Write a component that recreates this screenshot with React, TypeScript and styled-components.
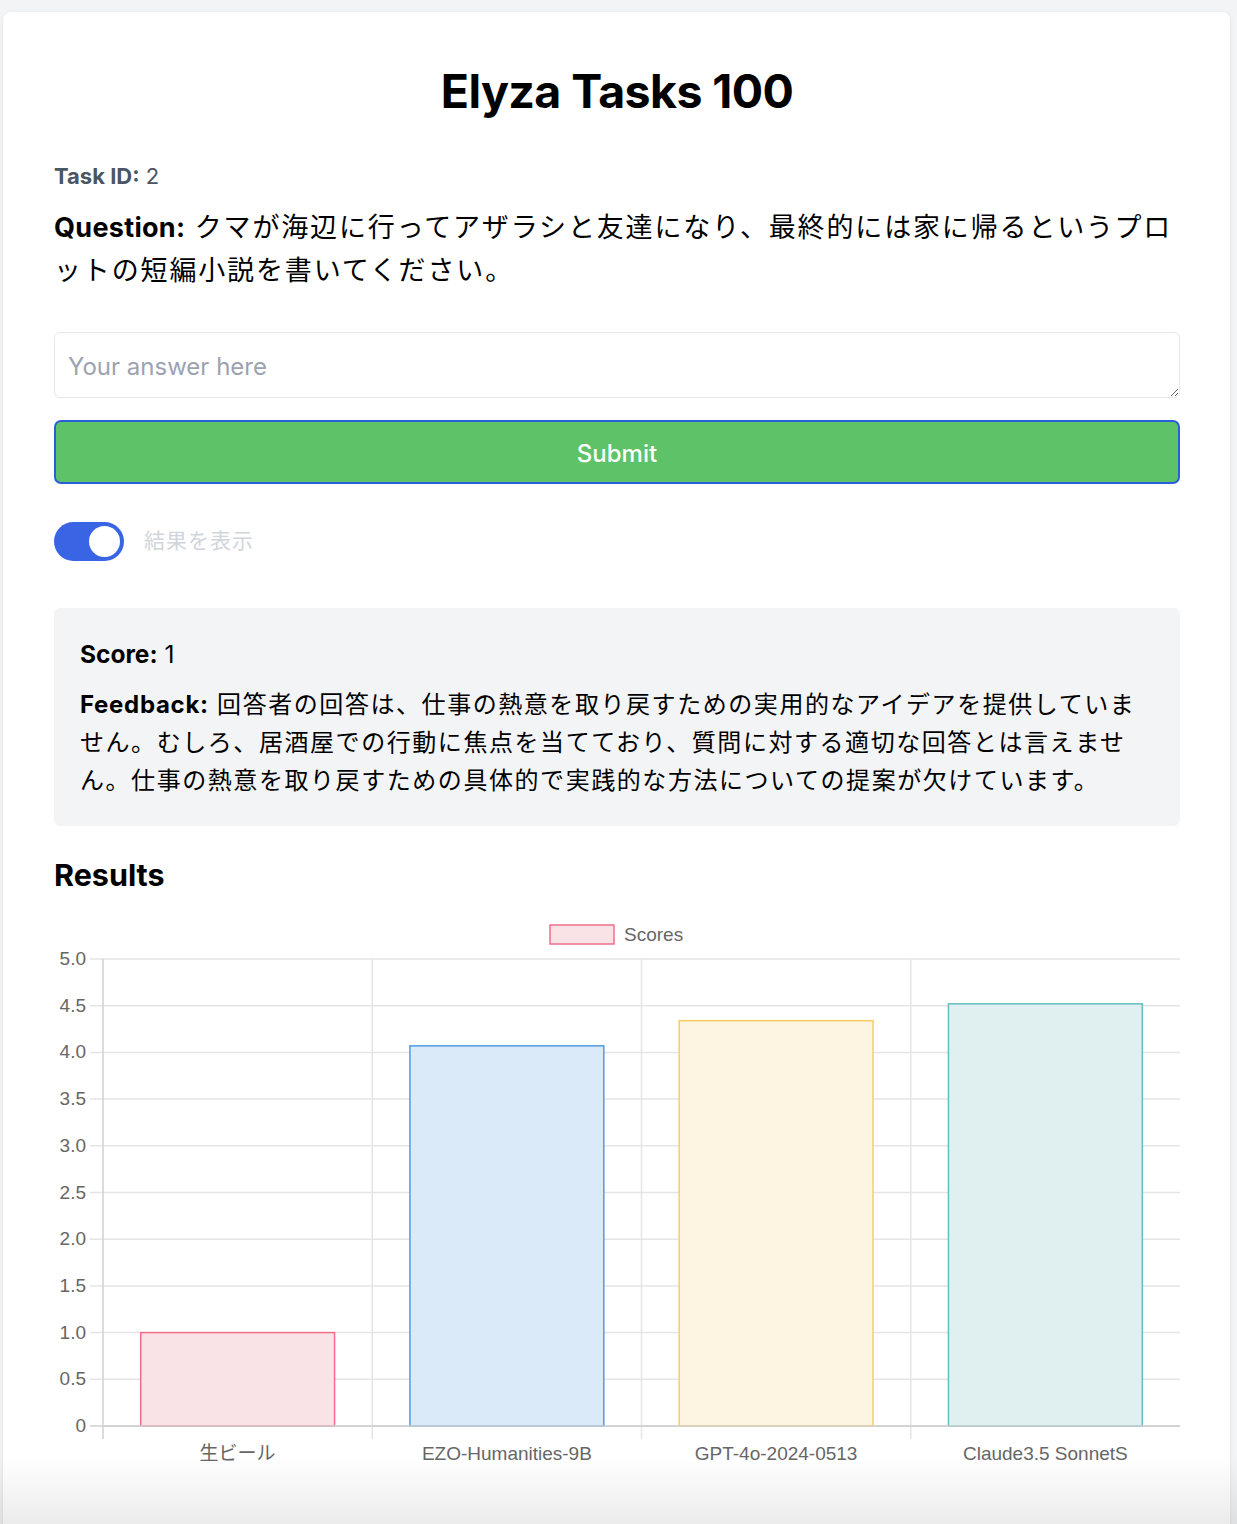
import React from "react";
import styled, { createGlobalStyle } from "styled-components";

const GlobalStyle = createGlobalStyle`
  html, body { margin: 0; padding: 0; }
  body {
    background: #f3f4f6;
    font-family: Inter, "Noto Sans CJK JP", sans-serif;
    color: #000;
  }
`;

const Page = styled.div`
  padding: 12px 7px 0 3px;
`;

const Card = styled.main`
  background: #fff;
  border-radius: 8px;
  box-shadow: 0 1px 4px rgba(0, 0, 0, 0.08);
  padding: 51px 50px 60px 51px;
`;

const Title = styled.h1`
  margin: 0 0 40px;
  text-align: center;
  font-size: 46.5px;
  line-height: 57.6px;
  font-weight: 700;
  letter-spacing: -0.6px;
`;

const TaskId = styled.p`
  margin: 0 0 15px;
  font-size: 22px;
  line-height: 30px;
  color: #4b5563;
`;

const Strong = styled.b<{ $ls?: number }>`
  font-weight: 700;
  letter-spacing: ${(p) => p.$ls ?? 0}px;
`;

const Question = styled.p`
  margin: 0 0 40px;
  font-size: 27px;
  line-height: 43px;
  letter-spacing: 1.85px;
`;

const Answer = styled.textarea`
  display: block;
  box-sizing: border-box;
  width: 100%;
  height: 66px;
  margin: 0 0 22px;
  padding: 16px 13px 12px;
  border: 1px solid #e5e7eb;
  border-radius: 6px;
  font-family: Inter, "Noto Sans CJK JP", sans-serif;
  font-size: 24px;
  line-height: 36px;
  color: #111827;
  outline: none;
  &::placeholder { color: #9ca3af; }
`;

const SubmitButton = styled.button`
  display: block;
  box-sizing: border-box;
  width: 100%;
  height: 64px;
  margin: 0 0 38px;
  padding: 3px 0 0;
  border: 2px solid #2b5fd9;
  border-radius: 7px;
  background: #5ec269;
  color: #fff;
  font-family: Inter, sans-serif;
  font-size: 24px;
  font-weight: 500;
  cursor: pointer;
`;

const ToggleRow = styled.label`
  display: flex;
  align-items: center;
  gap: 20px;
  margin: 0 0 47px;
`;

const Track = styled.span<{ $on: boolean }>`
  position: relative;
  display: inline-block;
  width: 70px;
  height: 39px;
  border-radius: 20px;
  background: ${(p) => (p.$on ? "#3964e4" : "#d1d5db")};
`;

const Knob = styled.span<{ $on: boolean }>`
  position: absolute;
  top: 4px;
  left: ${(p) => (p.$on ? "35px" : "4px")};
  width: 31px;
  height: 31px;
  border-radius: 50%;
  background: #fff;
`;

const ToggleLabel = styled.span`
  font-size: 21px;
  line-height: 26px;
  margin-top: -1px;
  color: #d1d5db;
  letter-spacing: 1px;
`;

const ResultBox = styled.section`
  background: #f3f4f6;
  border-radius: 6px;
  padding: 27px 26px 26px;
  margin: 0 0 29px;
`;

const ScoreLine = styled.p`
  margin: 0 0 13px;
  font-size: 24.5px;
  line-height: 38px;
`;

const Feedback = styled.p`
  margin: 0;
  font-size: 24px;
  line-height: 38px;
  letter-spacing: 1.56px;
`;

const ResultsTitle = styled.h2`
  margin: 0 0 10px;
  font-size: 30.5px;
  line-height: 40px;
  font-weight: 700;
`;

const ChartSvg = styled.svg`
  display: block;
  width: 100%;
  height: 580px;
  font-family: "Liberation Sans", Arial, sans-serif;
`;

const BottomFade = styled.div`
  position: fixed;
  left: 0;
  right: 0;
  bottom: 0;
  height: 66px;
  pointer-events: none;
  background: linear-gradient(to bottom, rgba(0, 0, 0, 0), rgba(0, 0, 0, 0.08));
`;

type Bar = { label: string; value: number; rgb: string; fill: string };

const bars: Bar[] = [
  { label: "生ビール", value: 1, rgb: "240,110,140", fill: "#fae3e7" },
  { label: "EZO-Humanities-9B", value: 4.07, rgb: "80,155,225", fill: "#dbeaf8" },
  { label: "GPT-4o-2024-0513", value: 4.34, rgb: "250,205,95", fill: "#fdf4e1" },
  { label: "Claude3.5 SonnetS", value: 4.52, rgb: "100,190,190", fill: "#e0f0f0" },
];

function Chart() {
  const left = 49;
  const right = 1126;
  const top = 54;
  const bottom = 521;
  const unit = (bottom - top) / 5;
  const cat = (right - left) / bars.length;
  const ticks = [5, 4.5, 4, 3.5, 3, 2.5, 2, 1.5, 1, 0.5, 0];
  const barW = cat * 0.72;
  return (
    <ChartSvg viewBox="0 0 1126 580" preserveAspectRatio="none">
      <rect x={496} y={20} width={64} height={19} fill="#fae3e7" stroke="rgb(240,110,140)" strokeWidth={1.5} />
      <text x={570} y={31} fontSize={19} fill="#666" dominantBaseline="middle">Scores</text>
      {ticks.map((t) => {
        const y = bottom - t * unit;
        return (
          <g key={t}>
            <line x1={36} x2={right} y1={y} y2={y} stroke={t === 0 ? "#d0d0d0" : "#e5e5e5"} strokeWidth={1.5} />
            <text x={32} y={y + 1} fontSize={19} fill="#666" textAnchor="end" dominantBaseline="middle">
              {t === 0 ? "0" : t.toFixed(1)}
            </text>
          </g>
        );
      })}
      {[0, 1, 2, 3].map((i) => {
        const x = left + i * cat;
        return <line key={i} x1={x} x2={x} y1={top} y2={bottom + 13} stroke={i === 0 ? "#d0d0d0" : "#e5e5e5"} strokeWidth={1.5} />;
      })}
      {bars.map((b, i) => {
        const cx = left + (i + 0.5) * cat;
        const h = b.value * unit;
        return (
          <g key={b.label}>
            <rect
              x={cx - barW / 2}
              y={bottom - h}
              width={barW}
              height={h}
              fill={b.fill}
              stroke={`rgb(${b.rgb})`}
              strokeWidth={1.5}
            />
            <text x={cx} y={550} fontSize={19} fill="#666" textAnchor="middle" dominantBaseline="middle"
              fontFamily={`"Liberation Sans", "Noto Sans CJK JP", sans-serif`}>
              {b.label}
            </text>
          </g>
        );
      })}
      <line x1={left} x2={right} y1={bottom} y2={bottom} stroke="#d0d0d0" strokeWidth={1.5} />
    </ChartSvg>
  );
}

export default function App() {
  const [show, setShow] = React.useState(true);
  return (
    <Page>
      <GlobalStyle />
      <Card>
        <Title>Elyza Tasks 100</Title>
        <TaskId>
          <Strong>Task ID:</Strong> 2
        </TaskId>
        <Question>
          <Strong $ls={0.3}>Question:</Strong> クマが海辺に行ってアザラシと友達になり、最終的には家に帰るというプロットの短編小説を書いてください。
        </Question>
        <Answer placeholder="Your answer here" rows={1} />
        <SubmitButton type="button">Submit</SubmitButton>
        <ToggleRow onClick={() => setShow((s) => !s)}>
          <Track $on={show}>
            <Knob $on={show} />
          </Track>
          <ToggleLabel>結果を表示</ToggleLabel>
        </ToggleRow>
        <ResultBox>
          <ScoreLine>
            <Strong>Score:</Strong> 1
          </ScoreLine>
          <Feedback>
            <Strong $ls={0.7}>Feedback:</Strong> 回答者の回答は、仕事の熱意を取り戻すための実用的なアイデアを提供していません。むしろ、居酒屋での行動に焦点を当てており、質問に対する適切な回答とは言えません。仕事の熱意を取り戻すための具体的で実践的な方法についての提案が欠けています。
          </Feedback>
        </ResultBox>
        <ResultsTitle>Results</ResultsTitle>
        <Chart />
      </Card>
      <BottomFade />
    </Page>
  );
}
